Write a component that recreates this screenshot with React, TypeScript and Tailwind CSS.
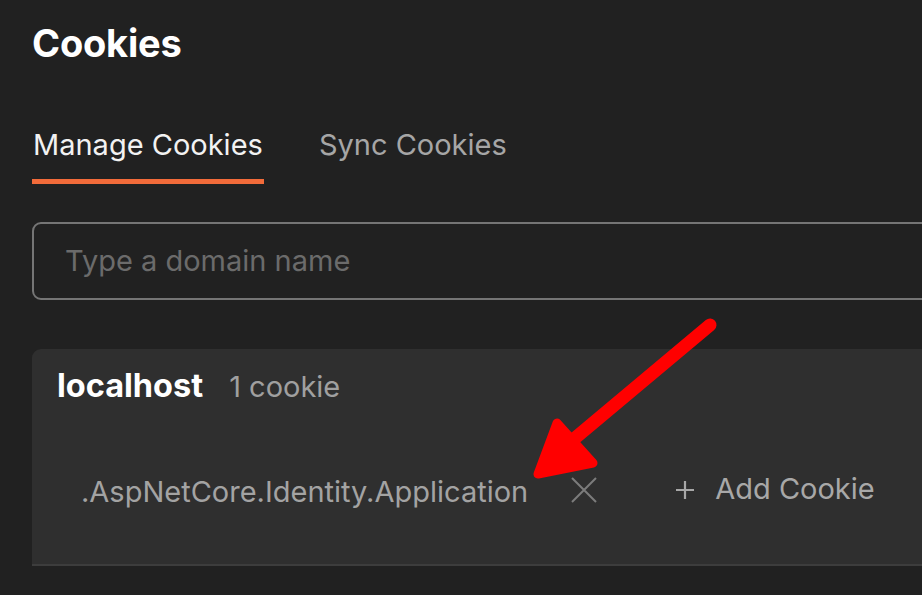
export default function App() {
  return (
    <div
      className="relative h-[595px] w-[922px] overflow-hidden bg-[#212121] text-white"
      style={{ fontFamily: "Inter, 'Noto Sans', sans-serif" }}
    >
      <div className="w-[1100px] pl-[32px] pt-[17px]">
        {/* Title */}
        <h1 className="text-[38px] font-bold leading-[52px] tracking-[-0.2px]">Cookies</h1>

        {/* Tabs */}
        <div className="mt-[57px] flex gap-[55px]">
          <div className="flex flex-col">
            <span className="px-px text-[29px] leading-[38px] text-[#f2f2f2]">Manage Cookies</span>
            <span className="mt-[15px] h-[5px] bg-[#f26b3a]" />
          </div>
          <span className="text-[29px] leading-[38px] text-[#a6a6a6]">Sync Cookies</span>
        </div>

        {/* Search */}
        <div className="mt-[38px] flex h-[78px] items-center rounded-[9px] border-2 border-[#757575] pl-[31px]">
          <span className="text-[29px] text-[#6b6b6b]">Type a domain name</span>
        </div>

        {/* Domain card */}
        <div className="mt-[49px] h-[217px] rounded-tl-[9px] border-b-2 border-[#3d3d3d] bg-[#2f2f2f]">
          <div className="flex items-baseline gap-[26px] pl-[25px] pt-[16px]">
            <span className="text-[32.5px] font-bold leading-[42px]">localhost</span>
            <span className="text-[29px] text-[#a0a0a0]">1 cookie</span>
          </div>
          <div className="mt-[63px] flex items-center pl-[49px]">
            <span className="text-[29px] leading-[40px] text-[#a3a3a3]">.AspNetCore.Identity.Application</span>
            <svg className="ml-[43px] mt-[-3px]" width="26" height="26" viewBox="0 0 26 26">
              <path d="M1 1L25 25M25 1L1 25" stroke="#7c7c7c" strokeWidth="2" />
            </svg>
            <div className="ml-[79px] flex items-center text-[#a8a8a8]">
              <svg className="mt-[-4px]" width="18" height="18" viewBox="0 0 18 18">
                <path d="M9 0V18M0 9H18" stroke="#a8a8a8" strokeWidth="2.2" />
              </svg>
              <span className="ml-[21px] mt-[-6px] text-[29px] leading-[40px]">Add Cookie</span>
            </div>
          </div>
        </div>
      </div>

      {/* Red annotation arrow */}
      <svg className="pointer-events-none absolute left-0 top-0" width="922" height="595" viewBox="0 0 922 595">
        <line x1="710" y1="325" x2="568" y2="444" stroke="#ff0000" strokeWidth="13" strokeLinecap="round" />
        <polygon
          points="538,474 557,423 593,463"
          fill="#ff0000"
          stroke="#ff0000"
          strokeWidth="9"
          strokeLinejoin="round"
        />
      </svg>
    </div>
  );
}
